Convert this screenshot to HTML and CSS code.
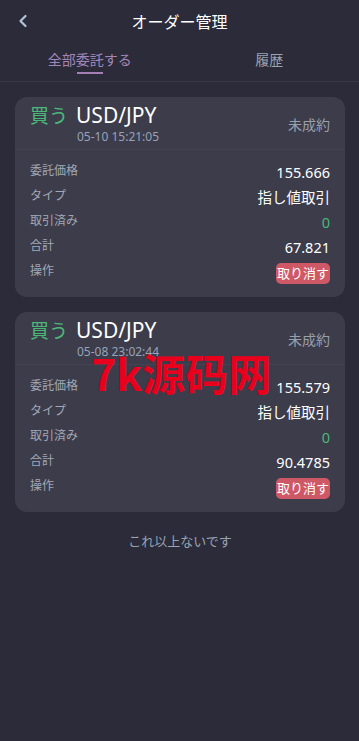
FILE: index.html
```html
<!DOCTYPE html>
<html lang="ja">
<head>
    <meta charset="UTF-8">
    <meta name="viewport" content="width=device-width, initial-scale=1.0">
    <title>オーダー管理</title>
    <link rel="stylesheet" href="styles.css">
</head>
<body>
    <header class="top-bar">
        <span class="back">
            <svg width="12" height="14" viewBox="0 0 12 14">
                <path d="M8.5 2 L3.5 7 L8.5 12" />
            </svg>
        </span>
        <h1>オーダー管理</h1>
    </header>

    <nav class="tabs">
        <div class="tab active">全部委託する</div>
        <div class="tab">履歴</div>
    </nav>

    <main class="orders">
        <div class="card">
            <div class="card-head">
                <div class="pair">
                    <div class="pair-line"><span class="side buy">買う</span><span class="symbol">USD/JPY</span></div>
                    <div class="time">05-10 15:21:05</div>
                </div>
                <div class="status">未成約</div>
            </div>
            <div class="card-body">
                <div class="row"><span class="label">委託価格</span><span class="value">155.666</span></div>
                <div class="row"><span class="label">タイプ</span><span class="value">指し値取引</span></div>
                <div class="row"><span class="label">取引済み</span><span class="value green">0</span></div>
                <div class="row"><span class="label">合計</span><span class="value">67.821</span></div>
                <div class="row"><span class="label">操作</span><button class="cancel">取り消す</button></div>
            </div>
        </div>

        <div class="card">
            <div class="card-head">
                <div class="pair">
                    <div class="pair-line"><span class="side buy">買う</span><span class="symbol">USD/JPY</span></div>
                    <div class="time">05-08 23:02:44</div>
                </div>
                <div class="status">未成約</div>
            </div>
            <div class="card-body">
                <div class="row"><span class="label">委託価格</span><span class="value">155.579</span></div>
                <div class="row"><span class="label">タイプ</span><span class="value">指し値取引</span></div>
                <div class="row"><span class="label">取引済み</span><span class="value green">0</span></div>
                <div class="row"><span class="label">合計</span><span class="value">90.4785</span></div>
                <div class="row"><span class="label">操作</span><button class="cancel">取り消す</button></div>
            </div>
            <div class="watermark">7k源码网</div>
        </div>

        <p class="no-more">これ以上ないです</p>
    </main>
</body>
</html>
```

FILE: styles.css
```css
body {
    margin: 0;
    background-color: #2b2b39;
    font-family: "Noto Sans", "Noto Sans CJK JP", sans-serif;
    color: #fff;
    min-height: 100vh;
}

.top-bar {
    position: relative;
    height: 42px;
    display: flex;
    align-items: center;
    justify-content: center;
}

.top-bar h1 {
    margin: 0;
    font-size: 16px;
    font-weight: normal;
    color: #fff;
}

.back {
    position: absolute;
    left: 17px;
    top: 14px;
    display: flex;
}

.back svg path {
    fill: none;
    stroke: #b4c4d8;
    stroke-width: 2.2;
    stroke-linecap: round;
    stroke-linejoin: round;
}

.tabs {
    display: flex;
    height: 39px;
    border-bottom: 1px solid #383846;
}

.tab {
    flex: 1;
    text-align: center;
    font-size: 14px;
    line-height: 20px;
    padding-top: 8px;
    color: #9aa3b2;
    position: relative;
}

.tab.active {
    color: #a386b9;
}

.tab.active::after {
    content: "";
    position: absolute;
    left: 50%;
    top: 30px;
    width: 26px;
    height: 2px;
    margin-left: -13px;
    background-color: #a57fb3;
}

.orders {
    padding: 15px 14px 0 15px;
}

.card {
    position: relative;
    background-color: #3c3c4b;
    border-radius: 12px;
    margin-bottom: 15px;
    height: 200px;
}

.card-head {
    display: flex;
    justify-content: space-between;
    align-items: flex-end;
    padding: 1px 15px 0 15px;
    height: 51px;
    border-bottom: 1px solid #434352;
}

.pair {
    padding-bottom: 5px;
}

.pair-line {
    display: flex;
    align-items: baseline;
    line-height: 28px;
}

.side {
    font-size: 19px;
    margin-right: 8px;
}

.buy {
    color: #4bb878;
}

.symbol {
    font-size: 21px;
    color: #fff;
}

.time {
    font-size: 12px;
    color: #98a3b8;
    margin-left: 47px;
    line-height: 14px;
}

.status {
    font-size: 14px;
    color: #9aa0ab;
    padding-bottom: 15px;
}

.card-body {
    padding: 9px 15px 0 15px;
}

.row {
    display: flex;
    justify-content: space-between;
    align-items: center;
    height: 25px;
}

.label {
    font-size: 12px;
    color: #a3a8b5;
    margin-top: -4px;
}

.value {
    font-size: 14.5px;
    color: #fff;
}

.value.green {
    color: #4bb878;
}

.cancel {
    background-color: #cf5867;
    color: #fff;
    border: none;
    border-radius: 5px;
    font-family: inherit;
    font-size: 13px;
    height: 21px;
    padding: 0 1px;
    line-height: 21px;
    white-space: nowrap;
    margin-top: 3px;
}

.watermark {
    position: absolute;
    left: 76px;
    top: 30px;
    font-size: 43px;
    line-height: 60px;
    font-weight: bold;
    color: #e8001c;
    font-family: "Noto Sans CJK SC", sans-serif;
}

.no-more {
    text-align: center;
    font-size: 13px;
    color: #9aa3b2;
    margin: 19px 0 0 0;
}
```
